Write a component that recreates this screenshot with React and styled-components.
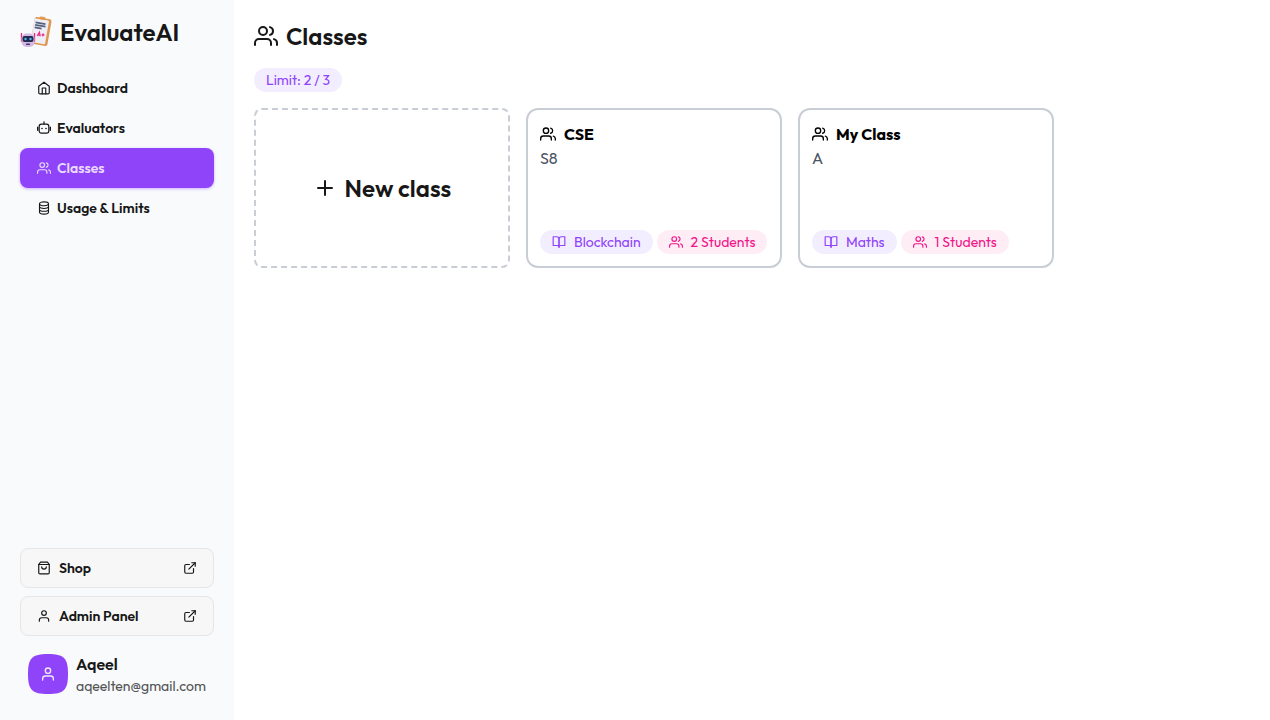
import React from "react";
import styled, { createGlobalStyle, css } from "styled-components";
import { FiHome, FiUsers, FiShoppingBag, FiUser, FiExternalLink, FiPlus, FiBookOpen } from "react-icons/fi";

const Global = createGlobalStyle`
  *, *::before, *::after { box-sizing: border-box; }
  body { margin: 0; background: #fff; color: #171717; font-family: Outfit, Lato, sans-serif; font-size: 16px; line-height: 24px; -webkit-font-smoothing: antialiased; }
  a { color: inherit; text-decoration: none; }
  h1, h2, p, ul { margin: 0; padding: 0; }
  ul { list-style: none; }
  button { font: inherit; color: inherit; cursor: pointer; }
  svg { flex: none; display: block; }
`;

const Page = styled.div`display: flex; min-height: 100vh;`;

const Sidebar = styled.aside`
  flex: none;
  display: flex;
  flex-direction: column;
  padding: 16px 20px;
  background: #f8fafc;
`;

const Brand = styled.a`
  display: flex;
  align-items: center;
  gap: 8px;
  margin-bottom: 20px;
  font-size: 24px;
  line-height: 32px;
  font-weight: 600;
`;

const buttonText = css`
  display: flex;
  align-items: center;
  height: 40px;
  padding: 0 16px;
  border: 1px solid transparent;
  border-radius: 8px;
  font-size: 14px;
  font-weight: 600;
`;

const NavLink = styled.a`
  ${buttonText}
  gap: 6px;
  ${(p) => p.$active && css`
    background: #8f44fa;
    color: #e9dafe;
    box-shadow: 0 1px 3px rgba(143, 68, 250, 0.4);
  `}
`;

const Bottom = styled.div`margin-top: auto; display: flex; flex-direction: column; gap: 8px;`;

const OutLink = styled.a`
  ${buttonText}
  gap: 8px;
  background: #f7f7f7;
  border-color: #e6e6e6;
  & > :last-child { margin-left: auto; }
`;

const Profile = styled.div`display: flex; align-items: center; gap: 8px; padding: 8px;`;

const Avatar = styled.div`
  display: grid;
  place-items: center;
  width: 40px;
  height: 40px;
  clip-path: path("M20 0C4 0 0 4 0 20s4 20 20 20 20-4 20-20S36 0 20 0Z");
  background: #8f44fa;
  color: #f3e8ff;
`;

const UserName = styled.p`font-weight: 600;`;
const Email = styled.p`font-size: 14px; line-height: 20px; color: #525354;`;

const Main = styled.main`flex: 1; min-width: 0; padding: 20px;`;

const Title = styled.h1`
  display: flex;
  align-items: center;
  gap: 8px;
  font-size: 24px;
  line-height: 32px;
  font-weight: 600;
  margin-bottom: 16px;
`;

const tones = {
  purple: css`background: #f3eeff; color: #8f44fa;`,
  pink: css`background: #ffedf5; color: #f0158a;`,
};

const Badge = styled.span`
  display: flex;
  align-items: center;
  gap: 8px;
  width: fit-content;
  height: 24px;
  padding: 0 12px;
  border-radius: 12px;
  font-size: 14px;
  white-space: nowrap;
  ${(p) => tones[p.$tone]}
`;

const Cards = styled.div`display: flex; flex-wrap: wrap; gap: 16px; margin-top: 16px;`;

const cardBox = css`
  width: 256px;
  min-height: 160px;
  border: 2px solid #c9cdd5;
  background: #fff;
`;

const NewCard = styled.button`
  ${cardBox}
  display: flex;
  align-items: center;
  justify-content: center;
  gap: 8px;
  border-style: dashed;
  border-radius: 8px;
  font-size: 24px;
  font-weight: 600;
`;

const Card = styled.a`
  ${cardBox}
  display: flex;
  flex-direction: column;
  padding: 12px;
  border-radius: 12px;
`;

const CardTitle = styled.h2`
  display: flex;
  align-items: center;
  gap: 8px;
  color: #000;
  font-size: 16px;
  font-weight: 700;
`;

const Section = styled.p`color: #4b5563;`;
const Badges = styled.div`display: flex; gap: 4px; margin-top: auto;`;

const Logo = () => (
  <svg width="32" height="32" viewBox="0 0 32 32" aria-hidden="true">
    <g transform="rotate(10 21 16)">
      <rect x="12.500" y="2" width="17" height="27" rx="2" fill="#df9650" />
      <rect x="12.500" y="3.500" width="14.500" height="24" rx="1" fill="#eeeef6" />
      <rect x="17" y="0.700" width="6" height="3" rx="1" fill="#e5994f" />
      <path d="M14 7.500h10M14 10h10.500M14 12.500h7" stroke="#56607f" strokeWidth="1.700" />
      <path d="M18 20.500l1.500-4 1.500 4M18.500 19.300h2M22 18.500h3M23.500 17v3" stroke="#ed2b87" strokeWidth="1.200" fill="none" />
    </g>
    <path d="M1.500 17v9M14.500 17v9" stroke="#ec2875" strokeWidth="1.300" />
    <rect x="1.500" y="17.500" width="13" height="13.500" rx="5" fill="#d3b7e4" />
    <rect x="2.500" y="20" width="11" height="6" rx="2" fill="#252b50" />
    <circle cx="5.500" cy="23" r="1.200" fill="#52b8eb" />
    <circle cx="10.500" cy="23" r="1.200" fill="#52b8eb" />
    <rect x="6" y="27.500" width="4" height="1.500" rx="0.500" fill="#493b68" />
  </svg>
);

const Robot = () => (
  <svg width="14" height="14" viewBox="0 0 14 14" fill="none" stroke="currentColor" strokeWidth="1.200" strokeLinecap="round" aria-hidden="true">
    <rect x="2.200" y="3.200" width="9.600" height="9" rx="2.200" />
    <path d="M7 0.800v2.200" />
    <path d="M0.700 6.300v3M13.300 6.300v3" strokeWidth="1.400" />
    <circle cx="5" cy="7.500" r="0.800" fill="currentColor" stroke="none" />
    <circle cx="9" cy="7.500" r="0.800" fill="currentColor" stroke="none" />
  </svg>
);

const Stack = () => (
  <svg width="14" height="14" viewBox="0 0 14 14" fill="none" stroke="currentColor" strokeWidth="1.100" aria-hidden="true">
    <ellipse cx="7" cy="2.800" rx="4.500" ry="1.900" />
    <path d="M2.500 2.800v8.400c0 1.050 2 1.900 4.500 1.900s4.500-.850 4.500-1.900V2.800M2.500 5.600c0 1.050 2 1.900 4.500 1.900s4.500-.850 4.500-1.900M2.500 8.400c0 1.050 2 1.900 4.500 1.900s4.500-.850 4.500-1.900" />
  </svg>
);

const nav = [
  { label: "Dashboard", Icon: FiHome },
  { label: "Evaluators", Icon: Robot },
  { label: "Classes", Icon: FiUsers, active: true },
  { label: "Usage & Limits", Icon: Stack },
];

const classes = [
  { name: "CSE", section: "S8", subject: "Blockchain", students: 2 },
  { name: "My Class", section: "A", subject: "Maths", students: 1 },
];

export default function App() {
  return (
    <Page>
      <Global />
      <Sidebar>
        <Brand href="#"><Logo />EvaluateAI</Brand>
        <nav>
          <ul>
            {nav.map(({ label, Icon, active }) => (
              <li key={label}>
                <NavLink href="#" $active={active} aria-current={active ? "page" : undefined}>
                  <Icon size={14} />{label}
                </NavLink>
              </li>
            ))}
          </ul>
        </nav>
        <Bottom>
          <OutLink href="#"><FiShoppingBag size={14} />Shop<FiExternalLink size={14} /></OutLink>
          <OutLink href="#"><FiUser size={14} />Admin Panel<FiExternalLink size={14} /></OutLink>
          <Profile>
            <Avatar><FiUser size={16} /></Avatar>
            <div>
              <UserName>Aqeel</UserName>
              <Email>aqeelten@gmail.com</Email>
            </div>
          </Profile>
        </Bottom>
      </Sidebar>
      <Main>
        <Title><FiUsers size={24} />Classes</Title>
        <Badge $tone="purple">Limit: 2 / 3</Badge>
        <Cards>
          <NewCard type="button"><FiPlus size={24} />New class</NewCard>
          {classes.map((c) => (
            <Card href="#" key={c.name}>
              <CardTitle><FiUsers size={16} />{c.name}</CardTitle>
              <Section>{c.section}</Section>
              <Badges>
                <Badge $tone="purple"><FiBookOpen size={14} />{c.subject}</Badge>
                <Badge $tone="pink"><FiUsers size={14} />{c.students} Students</Badge>
              </Badges>
            </Card>
          ))}
        </Cards>
      </Main>
    </Page>
  );
}
